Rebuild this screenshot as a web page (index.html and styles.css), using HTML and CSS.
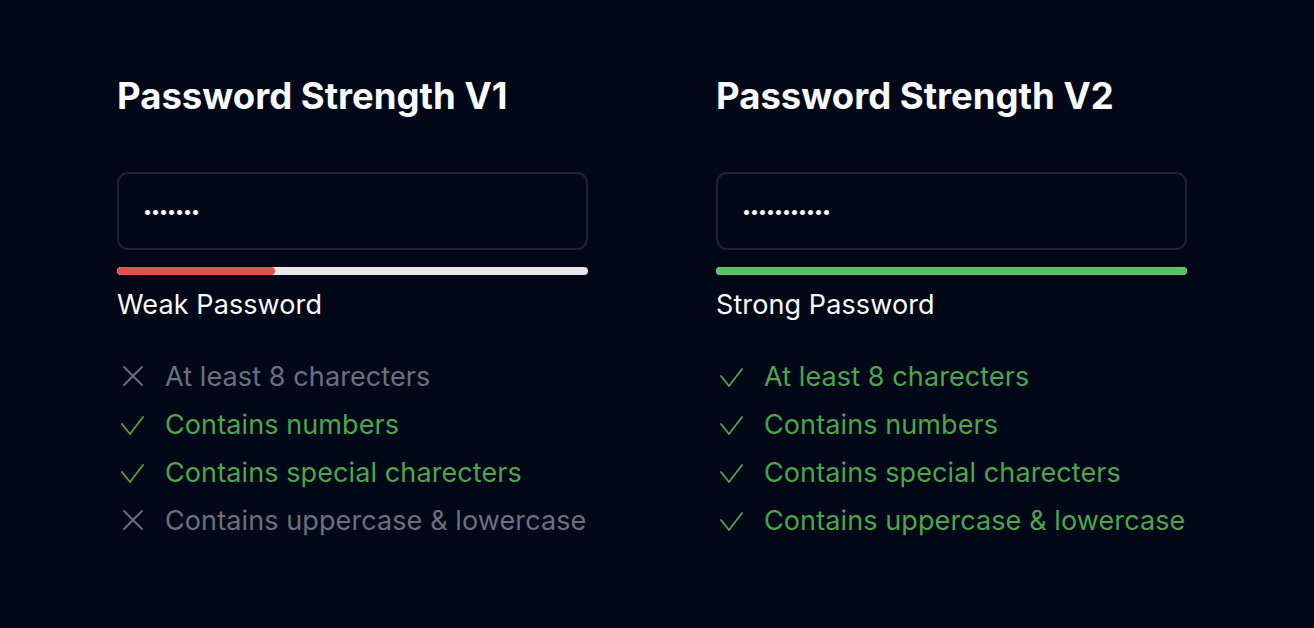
FILE: index.html
```html
<!DOCTYPE html>
<html>
<head>
<meta charset="utf-8">
<link rel="stylesheet" href="styles.css">
</head>
<body>
<main class="page">
  <section class="col">
    <h1 class="title">Password Strength V1</h1>
    <div class="field"><span class="dots">•••••••</span></div>
    <div class="bar"><div class="fill weak" style="width:33.5%"></div></div>
    <p class="status">Weak Password</p>
    <ul class="rules">
      <li class="rule off"><svg class="ico" viewBox="0 0 28 28"><path d="M7 4L25 22M25 4L7 22"/></svg>At least 8 charecters</li>
      <li class="rule on"><svg class="ico" viewBox="0 0 28 28"><path d="M5 13L13 23L26 6"/></svg>Contains numbers</li>
      <li class="rule on"><svg class="ico" viewBox="0 0 28 28"><path d="M5 13L13 23L26 6"/></svg>Contains special charecters</li>
      <li class="rule off"><svg class="ico" viewBox="0 0 28 28"><path d="M7 4L25 22M25 4L7 22"/></svg>Contains uppercase &amp; lowercase</li>
    </ul>
  </section>
  <section class="col">
    <h1 class="title">Password Strength V2</h1>
    <div class="field"><span class="dots">•••••••••••</span></div>
    <div class="bar"><div class="fill strong" style="width:100%"></div></div>
    <p class="status">Strong Password</p>
    <ul class="rules">
      <li class="rule on"><svg class="ico" viewBox="0 0 28 28"><path d="M5 13L13 23L26 6"/></svg>At least 8 charecters</li>
      <li class="rule on"><svg class="ico" viewBox="0 0 28 28"><path d="M5 13L13 23L26 6"/></svg>Contains numbers</li>
      <li class="rule on"><svg class="ico" viewBox="0 0 28 28"><path d="M5 13L13 23L26 6"/></svg>Contains special charecters</li>
      <li class="rule on"><svg class="ico" viewBox="0 0 28 28"><path d="M5 13L13 23L26 6"/></svg>Contains uppercase &amp; lowercase</li>
    </ul>
  </section>
</main>
</body>
</html>
```
FILE: styles.css
```css
html, body {
  margin: 0;
  padding: 0;
  background: #020817;
  height: 100%;
}
body {
  font-family: Inter, "Noto Sans", sans-serif;
  color: #f8fafc;
}
.page {
  display: flex;
  gap: 128px;
  padding: 72px 0 0 117px;
}
.col {
  width: 471px;
  display: flex;
  flex-direction: column;
}
.title {
  margin: 0;
  font-size: 36.5px;
  line-height: 48px;
  font-weight: 700;
  letter-spacing: 0;
  color: #f8fafc;
}
.field {
  margin-top: 52px;
  height: 78px;
  box-sizing: border-box;
  border: 2px solid #1e2433;
  border-radius: 11px;
  display: flex;
  align-items: center;
  padding-left: 24px;
}
.dots {
  font-size: 16px;
  letter-spacing: -1px;
  color: #ffffff;
}
.bar {
  margin-top: 17px;
  height: 8px;
  border-radius: 4px;
  background: #e5e7eb;
  overflow: hidden;
}
.fill {
  height: 100%;
  border-radius: 4px;
}
.fill.weak { background: #e0524e; }
.fill.strong { background: #5bbf64; }
.status {
  margin: 14px 0 0;
  font-size: 27px;
  line-height: 32px;
  letter-spacing: 0.1px;
  color: #f8fafc;
}
.rules {
  list-style: none;
  margin: 40px 0 0;
  padding: 0;
  display: flex;
  flex-direction: column;
  gap: 16px;
}
.rule {
  display: flex;
  align-items: center;
  gap: 20px;
  font-size: 27px;
  line-height: 32px;
  letter-spacing: 0.1px;
  white-space: nowrap;
}
.rule.on { color: #4ea54e; }
.rule.off { color: #6b7080; }
.ico {
  width: 28px;
  height: 28px;
  flex: none;
  fill: none;
  stroke: currentColor;
  stroke-width: 1.8;
  stroke-linecap: round;
  stroke-linejoin: round;
}
```
